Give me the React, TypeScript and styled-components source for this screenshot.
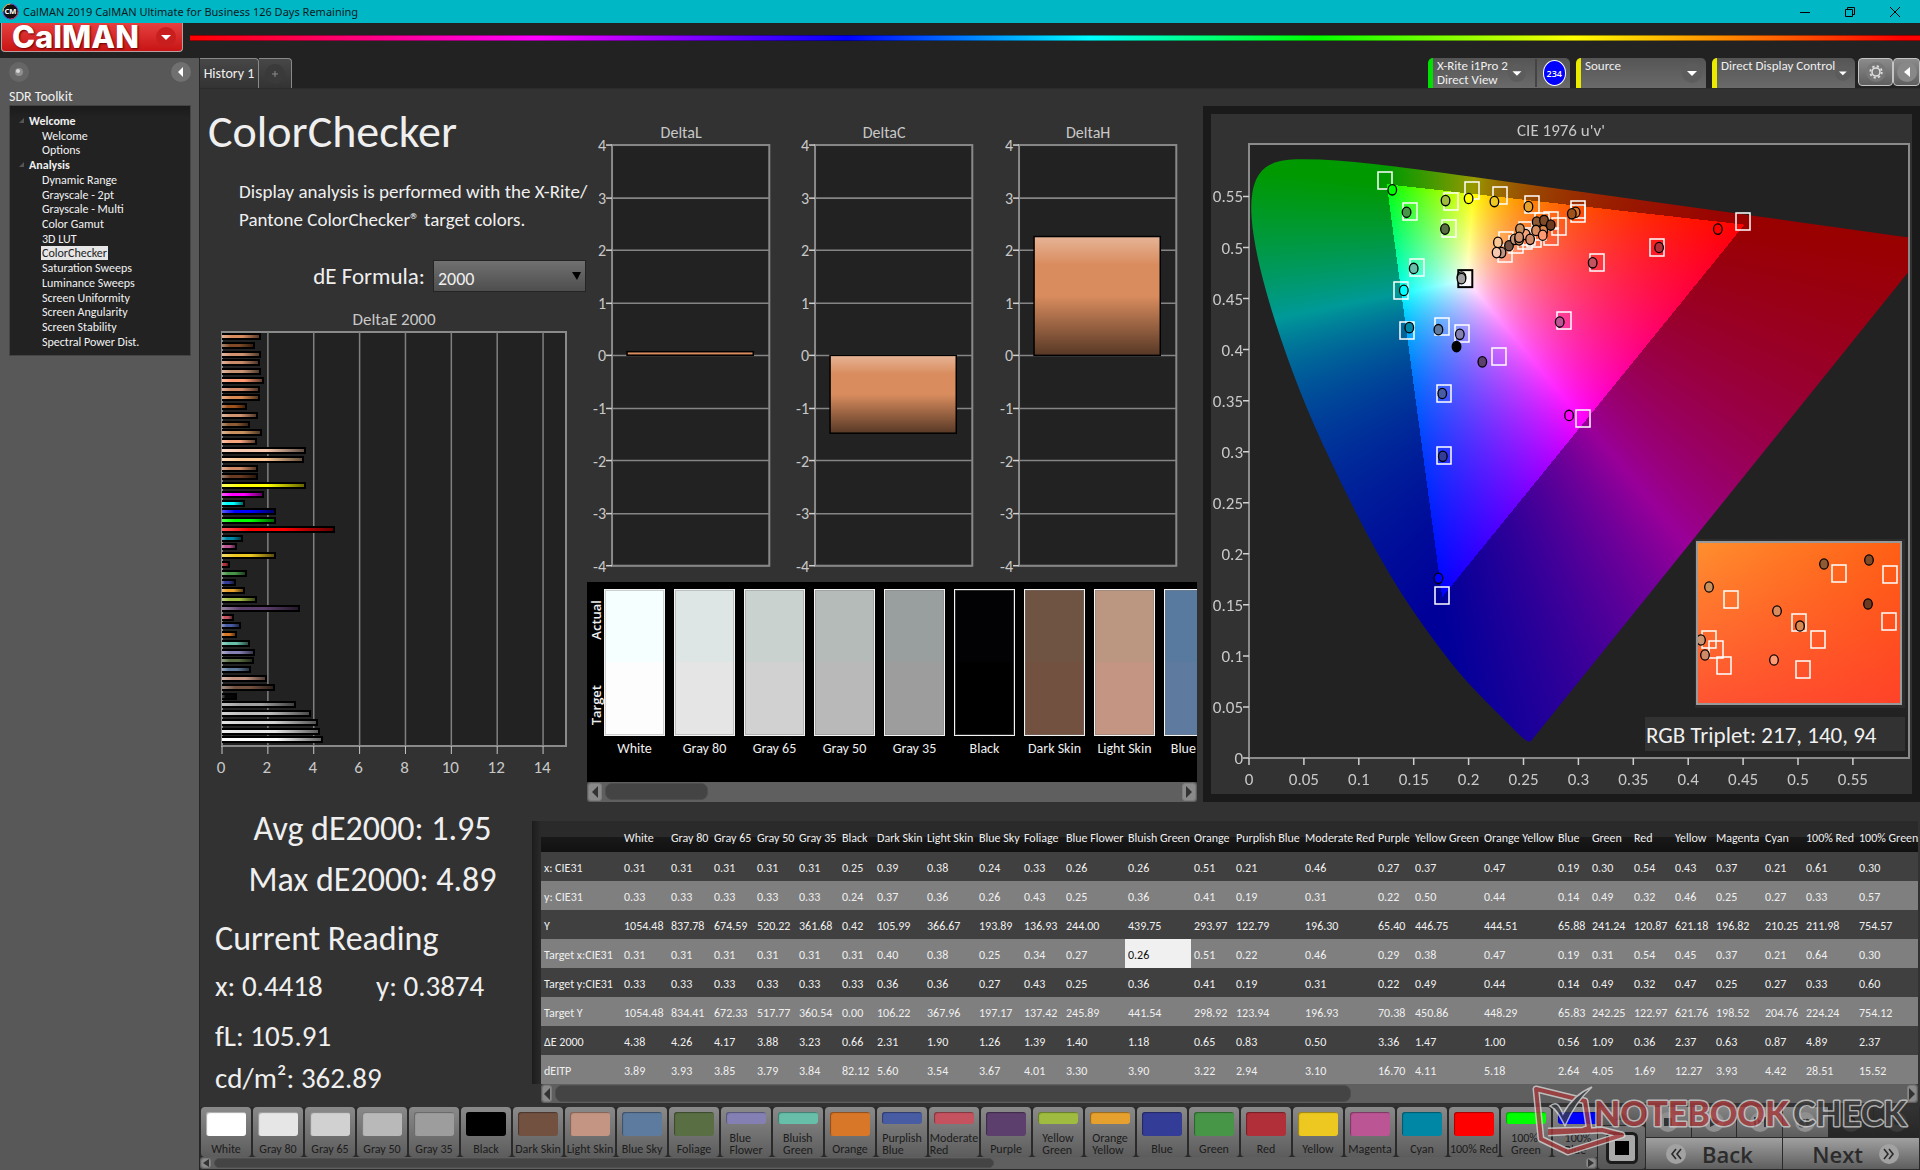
import React, { useEffect, useRef } from "react";
import styled, { createGlobalStyle } from "styled-components";

const SANS = "Calibri, Carlito, 'Roboto Condensed', 'Open Sans', sans-serif";
const UI = "'Open Sans', 'Noto Sans', sans-serif";

const GlobalStyle = createGlobalStyle`
  *, *::before, *::after { box-sizing: border-box; }
  body { margin: 0; background: #232323; color: #efefef; font-family: ${SANS}; }
  button, select { font: inherit; color: inherit; border: 0; margin: 0; padding: 0; background: none; }
  h1, h2, p, dl, dd, dt, ul { margin: 0; padding: 0; font-weight: 400; }
  ul { list-style: none; }
  svg { display: block; }
  a { color: inherit; text-decoration: none; }
`;

/* ---------- data ---------- */

const bars: [string, number][] = [
  ["#d98c5e", 1.66], ["#804a26", 1.4], ["#d0926e", 1.66], ["#c98a68", 1.6], ["#c99472", 1.66], ["#ff9a72", 1.78],
  ["#d08a68", 1.6], ["#d98850", 1.6], ["#a0521d", 1.04], ["#d09470", 1.52], ["#8d5a33", 1.18], ["#c8905c", 1.7],
  ["#f5a47c", 1.48], ["#f8c8ae", 3.6], ["#fbc795", 3.54], ["#d08a64", 1.52], ["#6b3a20", 1.52], ["#ffff00", 3.62],
  ["#ff00ff", 1.78], ["#00ffff", 0.96], ["#0000ff", 2.3], ["#00ff00", 2.3], ["#ff0000", 4.88], ["#0087a5", 0.87],
  ["#bc5594", 0.63], ["#edc820", 2.3], ["#b02f38", 0.32], ["#479547", 1.06], ["#333c97", 0.56], ["#e6a02e", 0.96],
  ["#9fbb40", 1.47], ["#5c3f6c", 3.36], ["#c4535f", 0.5], ["#485ca4", 0.8], ["#d97728", 0.63], ["#67bfa9", 1.18],
  ["#8480b3", 1.4], ["#596c42", 1.36], ["#5f7a9c", 1.24], ["#c49582", 1.92], ["#725141", 2.28], ["#050505", 0.63],
  ["#a0a0a0", 3.18], ["#bdbdbd", 3.84], ["#d2d2d2", 4.14], ["#e6e6e6", 4.24], ["#ffffff", 4.36],
];

const columns: [string, number][] = [
  ["White", 47], ["Gray 80", 43], ["Gray 65", 43], ["Gray 50", 42], ["Gray 35", 43], ["Black", 35], ["Dark Skin", 50],
  ["Light Skin", 52], ["Blue Sky", 45], ["Foliage", 42], ["Blue Flower", 62], ["Bluish Green", 66], ["Orange", 42],
  ["Purplish Blue", 69], ["Moderate Red", 73], ["Purple", 37], ["Yellow Green", 69], ["Orange Yellow", 74], ["Blue", 34],
  ["Green", 42], ["Red", 41], ["Yellow", 41], ["Magenta", 49], ["Cyan", 41], ["100% Red", 53], ["100% Green", 62],
];

const rows: [string, string][] = [
  ["x: CIE31", "0.31 0.31 0.31 0.31 0.31 0.25 0.39 0.38 0.24 0.33 0.26 0.26 0.51 0.21 0.46 0.27 0.37 0.47 0.19 0.30 0.54 0.43 0.37 0.21 0.61 0.30"],
  ["y: CIE31", "0.33 0.33 0.33 0.33 0.33 0.24 0.37 0.36 0.26 0.43 0.25 0.36 0.41 0.19 0.31 0.22 0.50 0.44 0.14 0.49 0.32 0.46 0.25 0.27 0.33 0.57"],
  ["Y", "1054.48 837.78 674.59 520.22 361.68 0.42 105.99 366.67 193.89 136.93 244.00 439.75 293.97 122.79 196.30 65.40 446.75 444.51 65.88 241.24 120.87 621.18 196.82 210.25 211.98 754.57"],
  ["Target x:CIE31", "0.31 0.31 0.31 0.31 0.31 0.31 0.40 0.38 0.25 0.34 0.27 0.26 0.51 0.22 0.46 0.29 0.38 0.47 0.19 0.31 0.54 0.45 0.37 0.21 0.64 0.30"],
  ["Target y:CIE31", "0.33 0.33 0.33 0.33 0.33 0.33 0.36 0.36 0.27 0.43 0.25 0.36 0.41 0.19 0.31 0.22 0.49 0.44 0.14 0.49 0.32 0.47 0.25 0.27 0.33 0.60"],
  ["Target Y", "1054.48 834.41 672.33 517.77 360.54 0.00 106.22 367.96 197.17 137.42 245.89 441.54 298.92 123.94 196.93 70.38 450.86 448.29 65.83 242.25 122.97 621.76 198.52 204.76 224.24 754.12"],
  ["ΔE 2000", "4.38 4.26 4.17 3.88 3.23 0.66 2.31 1.90 1.26 1.39 1.40 1.18 0.65 0.83 0.50 3.36 1.47 1.00 0.56 1.09 0.36 2.37 0.63 0.87 4.89 2.37"],
  ["dEITP", "3.89 3.93 3.85 3.79 3.84 82.12 5.60 3.54 3.67 4.01 3.30 3.90 3.22 2.94 3.10 16.70 4.11 5.18 2.64 4.05 1.69 12.27 3.93 4.42 28.51 15.52"],
];

const compare: [string, string, string][] = [
  ["White", "#f6ffff", "#fdfdfd"], ["Gray 80", "#dde6e5", "#e5e5e5"], ["Gray 65", "#cad2cf", "#d1d1d1"],
  ["Gray 50", "#b5bbb9", "#b9b9b9"], ["Gray 35", "#999f9e", "#9d9d9d"], ["Black", "#020204", "#000000"],
  ["Dark Skin", "#6f5443", "#725141"], ["Light Skin", "#bb9781", "#c39582"], ["Blue Sky", "#587a9f", "#5f7a9f"],
];

const patches: [string, string][] = [
  ["White", "#ffffff"], ["Gray 80", "#e6e6e6"], ["Gray 65", "#d1d1d1"], ["Gray 50", "#b9b9b9"], ["Gray 35", "#9d9d9d"],
  ["Black", "#000000"], ["Dark Skin", "#725141"], ["Light Skin", "#c49582"], ["Blue Sky", "#5d7b9f"], ["Foliage", "#5a6e43"],
  ["Blue Flower", "#8480b3"], ["Bluish Green", "#67bfa9"], ["Orange", "#d97728"], ["Purplish Blue", "#485ca4"],
  ["Moderate Red", "#c4535f"], ["Purple", "#5c3f6c"], ["Yellow Green", "#9fbb40"], ["Orange Yellow", "#e6a02e"],
  ["Blue", "#333c97"], ["Green", "#479547"], ["Red", "#b02f38"], ["Yellow", "#edc820"], ["Magenta", "#bb5594"],
  ["Cyan", "#0087a5"], ["100% Red", "#ff0000"], ["100% Green", "#00ff00"], ["100% Blue", "#0000ff"],
];
const twoLine = (n: string) => /Flower|Bluish|Purplish|Moderate|Yellow Green|Orange Yellow|100% (Green|Blue)/.test(n);

const targets: [number, number][] = [
  [0.124, 0.565], [0.147, 0.535], [0.184, 0.545], [0.203, 0.555], [0.229, 0.55], [0.258, 0.542], [0.2995, 0.537],
  [0.2995, 0.533], [0.182, 0.518], [0.45, 0.525], [0.372, 0.5], [0.317, 0.485], [0.2865, 0.428], [0.153, 0.48],
  [0.138, 0.457], [0.1435, 0.418], [0.1755, 0.422], [0.194, 0.4155], [0.228, 0.393], [0.1775, 0.357],
  [0.3045, 0.332], [0.1775, 0.2955], [0.1755, 0.159], [0.234, 0.5065], [0.233, 0.494], [0.2435, 0.502],
  [0.252, 0.516], [0.2665, 0.525], [0.2755, 0.526], [0.282, 0.52], [0.2755, 0.51], [0.26, 0.5085], [0.251, 0.506],
  [0.2545, 0.51], [0.2645, 0.515],
];

const readings: [number, number, string][] = [
  [0.1305, 0.5565, "#00ff00"], [0.1435, 0.5345, "#479547"], [0.179, 0.546, "#9fbb40"], [0.2, 0.548, "#ffff00"],
  [0.2235, 0.545, "#edc820"], [0.2545, 0.54, "#e6a02e"], [0.2975, 0.5345, "#d97728"], [0.294, 0.533, "#a0521d"],
  [0.1785, 0.518, "#596c42"], [0.427, 0.518, "#ff0000"], [0.3735, 0.5, "#b02f38"], [0.313, 0.485, "#c4535f"],
  [0.283, 0.427, "#bc5594"], [0.15, 0.4795, "#67bfa9"], [0.1935, 0.471, "#bdbdbd"], [0.1935, 0.4695, "#a0a0a0"],
  [0.141, 0.458, "#00ffff"], [0.146, 0.4215, "#0087a5"], [0.1725, 0.4195, "#5f7a9c"], [0.192, 0.415, "#8480b3"],
  [0.189, 0.403, "#000000"], [0.2125, 0.388, "#5c3f6c"], [0.176, 0.357, "#485ca4"], [0.2915, 0.3355, "#ff00ff"],
  [0.1765, 0.2955, "#333c97"], [0.1725, 0.176, "#0000ff"], [0.23, 0.495, "#c49582"], [0.2267, 0.505, "#fbc795"],
  [0.2255, 0.495, "#f8c8ae"], [0.2368, 0.5017, "#725141"], [0.252, 0.5127, "#f5a47c"], [0.2468, 0.518, "#c8905c"],
  [0.242, 0.508, "#c99472"], [0.246, 0.5075, "#c98a68"], [0.246, 0.51, "#d0926e"], [0.256, 0.508, "#d08a68"],
  [0.262, 0.525, "#8d5a33"], [0.268, 0.5167, "#d98850"], [0.2614, 0.5167, "#d98c5e"], [0.2687, 0.5265, "#804a26"],
  [0.2748, 0.522, "#6b3a20"], [0.2675, 0.512, "#ff9a72"],
];

const insetTargets: [number, number][] = [
  [142, 32], [193, 33], [34, 58], [102, 81], [121, 98], [192, 80], [12, 98], [19, 108], [27, 124], [106, 128],
];
const insetReadings: [number, number, string][] = [
  [127, 22, "#8d5a33"], [172, 18, "#804a26"], [12, 45, "#c8905c"], [171, 62, "#6b3a20"], [80, 69, "#d98c5e"],
  [103, 84, "#d98850"], [4, 98, "#c99472"], [8, 113, "#d08a68"], [77, 118, "#ff9a72"],
];

/* Spectral locus, CIE 1931 x,y */
const locusXY: [number, number][] = [
  [0.1741, 0.005], [0.1733, 0.0048], [0.1714, 0.0051], [0.1689, 0.0069], [0.1644, 0.0109], [0.1566, 0.0177],
  [0.144, 0.0297], [0.1241, 0.0578], [0.1096, 0.0868], [0.0913, 0.1327], [0.0687, 0.2007], [0.0454, 0.295],
  [0.0235, 0.4127], [0.0082, 0.5384], [0.0039, 0.6548], [0.0139, 0.7502], [0.0389, 0.812], [0.0743, 0.8338],
  [0.1142, 0.8262], [0.1547, 0.8059], [0.2296, 0.7543], [0.3016, 0.6923], [0.3731, 0.6245], [0.4441, 0.5547],
  [0.5125, 0.4866], [0.5752, 0.4242], [0.627, 0.3725], [0.6658, 0.334], [0.6915, 0.3083], [0.719, 0.2809],
  [0.7347, 0.2653],
];

/* ---------- window chrome ---------- */

const Shell = styled.div`
  position: relative;
  display: flex;
  flex-direction: column;
  min-height: 100vh;
  overflow: hidden;
`;
const TitleBar = styled.header`
  display: flex;
  align-items: center;
  gap: 4px;
  height: 23px;
  padding: 0 15px 0 2px;
  background: #00b7c6;
  color: #0a1a1c;
  font: 11px 'Noto Sans', sans-serif;
`;
const TitleText = styled.span`flex: 1;`;
const WindowButtons = styled.div`
  display: flex;
  gap: 25px;
`;
const IconButton = styled.button`
  display: grid;
  place-items: center;
  width: 20px;
  height: 20px;
`;
const BrandRow = styled.div`
  display: flex;
  align-items: flex-start;
  height: 35px;
  background: #222;
`;
const Brand = styled.button`
  display: flex;
  align-items: center;
  justify-content: space-between;
  width: 182px;
  height: 29px;
  margin: 0 7px 0 1px;
  padding: 0 6px 1px 10px;
  border: 1px solid #b9a0a0;
  border-top: 0;
  border-radius: 0 0 4px 4px;
  background: linear-gradient(#e64040, #c81414);
  color: #fff;
  font: 800 31px/28px Inter, sans-serif;
  text-shadow: 1px 1px 2px #600;
`;
const Rainbow = styled.div`
  flex: 1;
  height: 6px;
  margin-top: 12px;
  border: solid rgba(0, 0, 0, 0.4);
  border-width: 1px 0;
  background: linear-gradient(90deg, #f00 0%, #f0f 20%, #00f 38%, #0ff 52%, #0f0 65%, #ff0 80%, #f00 99%) border-box;
`;
const Body = styled.div`
  flex: 1;
  display: grid;
  grid-template-columns: 200px minmax(0, 1fr);
`;

/* ---------- sidebar ---------- */

const Sidebar = styled.aside`
  padding: 3px 8px 0 9px;
  border-right: 1px solid #262626;
  background: #585858;
  font-size: 12px;
`;
const SideTop = styled.div`
  display: flex;
  justify-content: space-between;
  align-items: center;
  height: 21px;
`;
const SideTitle = styled.h2`
  height: 23px;
  font-size: 14px;
  line-height: 29px;
`;
const Tree = styled.nav`
  height: 251px;
  padding: 8px 0 6px 9px;
  border: 1px solid #444;
  background: linear-gradient(#1b1b1b, #222 12px);
  display: flex;
  flex-direction: column;
  justify-content: space-between;
`;
const Branch = styled.h3`
  display: flex;
  align-items: center;
  gap: 4px;
  margin: 0;
  font-size: 12px;
  line-height: 14px;
`;
const Leaf = styled.a<{ $on?: boolean }>`
  align-self: flex-start;
  margin-left: 22px;
  padding: 0 1px;
  line-height: 14px;
  background: ${(p) => (p.$on ? "#e6e6e6" : "none")};
  color: ${(p) => (p.$on ? "#222" : "#f2f2f2")};
`;

/* ---------- tab strip ---------- */

const Main = styled.main`
  display: flex;
  flex-direction: column;
  background: #323232;
`;
const Strip = styled.div`
  display: flex;
  height: 31px;
  background: #222;
  border-bottom: 1px solid #2b2b2b;
`;
const Tab = styled.button<{ $w: number }>`
  display: grid;
  place-items: center;
  width: ${(p) => p.$w}px;
  height: 30px;
  border: 1px solid #8a8a8a;
  border-width: 1px 1px 0 0;
  border-top-right-radius: 4px;
  background: linear-gradient(#474747, #333);
  font-size: 14px;
`;
const Devices = styled.div`
  display: flex;
  align-items: flex-start;
  gap: 6px;
  margin-left: auto;
`;
const Tools = styled.div`
  display: flex;
  margin-left: -3px;
`;
const Device = styled.button<{ $w: number; $bar: string }>`
  display: flex;
  align-items: center;
  width: ${(p) => p.$w}px;
  height: 30px;
  padding: 0 4px 0 4px;
  border-left: 5px solid ${(p) => p.$bar};
  border-radius: 5px 5px 0 0;
  background: linear-gradient(#555, #6a6a6a);
  font-size: 13px;
  line-height: 14px;
  text-align: left;
`;
const DeviceName = styled.span`
  flex: 1;
  align-self: flex-start;
  padding-top: 1px;
  white-space: nowrap;
`;
const Divider = styled.span`
  width: 2px;
  height: 28px;
  margin: 0 6px 0 9px;
  background: #444;
`;
const Badge = styled.span`
  display: grid;
  place-items: center;
  width: 26px;
  height: 26px;
  border: 1px solid #fff;
  border-radius: 50%;
  background: #00f;
  color: #fff;
  font: 600 9px ${UI};
`;
const ToolButton = styled.button<{ $w: number }>`
  display: grid;
  place-items: center;
  width: ${(p) => p.$w}px;
  height: 28px;
  border: 1px solid #c4c4c4;
  border-radius: 4px;
  background: linear-gradient(#8b8b8b, #5f5f5f);
`;

/* ---------- workspace ---------- */

const Upper = styled.div`
  display: grid;
  grid-template-columns: 387px minmax(0, 616fr) minmax(0, 717fr);
  align-items: start;
  padding-bottom: 1px;
`;
const Intro = styled.section`padding-top: 12px;`;
const PageTitle = styled.h1`
  padding-left: 8px;
  font-size: 46px;
  line-height: 60px;
`;
const Lead = styled.p`
  padding: 17px 0 0 39px;
  font-size: 19px;
  line-height: 28px;
  white-space: nowrap;
`;
const Formula = styled.div`
  display: flex;
  justify-content: flex-end;
  align-items: center;
  gap: 8px;
  margin: 26px 1px 16px 0;
  font-size: 23px;
`;
const SelectBox = styled.span`
  position: relative;
  width: 153px;
  svg { position: absolute; right: 5px; top: 12px; pointer-events: none; }
`;
const Select = styled.select`
  appearance: none;
  width: 100%;
  height: 32px;
  padding: 5px 0 0 4px;
  border: 1px solid #242424;
  background: linear-gradient(#707070, #4e4e4e);
  font-size: 18px;
`;
const Middle = styled.section`padding: 31px 6px 0 0;`;
const Deltas = styled.div`
  display: grid;
  grid-template-columns: repeat(3, 1fr);
  margin-bottom: 6px;
`;
const ComparePanel = styled.div`
  display: flex;
  height: 200px;
  overflow: hidden;
  background: #000;
`;
const SideLabels = styled.div`
  display: flex;
  flex-direction: column;
  flex: none;
  justify-content: space-between;
  align-items: center;
  width: 17px;
  height: 144px;
  padding: 18px 0 0;
  font: 600 13px/16px ${UI};
  span { writing-mode: vertical-rl; transform: rotate(180deg); }
`;
const CompareItem = styled.figure`
  flex: none;
  width: 70px;
  margin: 7px 0 0;
  figcaption { width: 61px; font-size: 14px; line-height: 26px; text-align: center; white-space: nowrap; }
`;
const Split = styled.div<{ $a: string; $t: string }>`
  width: 61px;
  height: 147px;
  border: 1px solid #f4f4f4;
  background: linear-gradient(${(p) => p.$a} 50%, ${(p) => p.$t} 50%);
  box-shadow: inset 0 0 0 1px rgba(120, 120, 120, 0.35);
`;

/* ---------- scroll bar ---------- */

const Track = styled.div<{ $h: number }>`
  display: flex;
  align-items: center;
  gap: 3px;
  height: ${(p) => p.$h}px;
  padding: 0 1px;
  border-radius: 3px;
  background: #5f5f5f;
`;
const ArrowButton = styled.button<{ $w: number }>`
  display: grid;
  place-items: center;
  flex: none;
  width: ${(p) => p.$w}px;
  height: 88%;
  border: 1px solid #7c7c7c;
  border-radius: 3px;
  background: #8a8a8a;
`;
const Rail = styled.div`
  flex: 1;
  height: 86%;
`;
const Thumb = styled.div`
  height: 100%;
  border: 1px solid #4e4e4e;
  border-radius: 7px;
  background: #444;
`;
function ScrollBar({ h, arrow, size }: { h: number; arrow: number; size: number }) {
  const tip = Math.round(h * 0.3);
  return (
    <Track $h={h}>
      <ArrowButton $w={arrow} aria-label="Scroll left">
        <svg width="6" height={tip * 2} viewBox="0 0 6 12" preserveAspectRatio="none"><path d="M6 0V12L0 6Z" fill="#333" /></svg>
      </ArrowButton>
      <Rail><Thumb style={{ width: `${size}%` }} /></Rail>
      <ArrowButton $w={arrow} aria-label="Scroll right">
        <svg width="6" height={tip * 2} viewBox="0 0 6 12" preserveAspectRatio="none"><path d="M0 0V12L6 6Z" fill="#333" /></svg>
      </ArrowButton>
    </Track>
  );
}

/* ---------- charts ---------- */

const Chart = styled.svg`
  width: 100%;
  height: auto;
  font-family: ${SANS};
  fill: #c8c8c8;
`;

function DeltaEChart() {
  const x0 = 22, y0 = 24, w = 344, h = 414, unit = w / 15, pitch = 8.77;
  return (
    <Chart viewBox="0 0 387 474" fontSize="17" role="img" aria-label="DeltaE 2000">
      <defs>
        <linearGradient id="sheenX">
          <stop offset="0" stopColor="#fff" stopOpacity=".35" />
          <stop offset=".25" stopColor="#fff" stopOpacity="0" />
          <stop offset=".55" stopColor="#000" stopOpacity="0" />
          <stop offset="1" stopColor="#000" stopOpacity=".6" />
        </linearGradient>
      </defs>
      <text x="194" y="17" textAnchor="middle">DeltaE 2000</text>
      <rect x={x0} y={y0} width={w} height={h} fill="#222" stroke="#8a8a8a" strokeWidth="2" />
      {[0, 2, 4, 6, 8, 10, 12, 14].map((t) => (
        <g key={t}>
          {t > 0 && <path d={`M${x0 + t * unit} ${y0}v${h}`} stroke="#808080" strokeWidth="1.5" />}
          <path d={`M${x0 + t * unit} ${y0 + h}v8`} stroke="#c8c8c8" />
          <text x={x0 + t * unit - 1} y="465" textAnchor="middle">{t}</text>
        </g>
      ))}
      {bars.map(([c, v], i) => (
        <g key={i} transform={`translate(${x0} ${Math.round(y0 + 4 + i * pitch) - 3})`} shapeRendering="crispEdges">
          <rect width={v * unit + 1} height="7" fill="#000" />
          <rect y="2" width={v * unit - 1} height="3" fill={c} />
          <rect y="2" width={v * unit - 1} height="3" fill="url(#sheenX)" />
        </g>
      ))}
    </Chart>
  );
}

function DeltaChart({ name, value }: { name: string; value: number }) {
  const x0 = 25, y0 = 25, w = 157, unit = 52.5;
  const top = y0 + (4 - Math.max(value, 0)) * unit;
  const tall = Math.abs(value) * unit;
  return (
    <Chart viewBox="0 0 203 455" fontSize="16" role="img" aria-label={name}>
      <defs>
        <linearGradient id="sheenY" x2="0" y2="1">
          <stop offset="0" stopColor="#fff" stopOpacity=".35" />
          <stop offset=".24" stopColor="#fff" stopOpacity="0" />
          <stop offset=".5" stopColor="#000" stopOpacity="0" />
          <stop offset="1" stopColor="#000" stopOpacity=".6" />
        </linearGradient>
      </defs>
      <text x="94" y="18" textAnchor="middle">{name}</text>
      <rect x={x0} y={y0} width={w} height={unit * 8} fill="#222" stroke="#8a8a8a" strokeWidth="2" />
      {[4, 3, 2, 1, 0, -1, -2, -3, -4].map((t) => (
        <g key={t}>
          <path d={`M${x0} ${Math.round(y0 + (4 - t) * unit)}h${w}`} stroke="#858585" strokeWidth="1.5" />
          <path d={`M${x0 - 6} ${Math.round(y0 + (4 - t) * unit)}h6`} stroke="#d0d0d0" strokeWidth="1.5" />
          <text x={x0 - 6} y={y0 + (4 - t) * unit + 6} textAnchor="end">{t}</text>
        </g>
      ))}
      <rect x={x0 + 15} y={top} width="126" height={tall} fill="#d98c5e" />
      <rect x={x0 + 15} y={top} width="126" height={tall} fill="url(#sheenY)" stroke="#000" strokeWidth="1.5" />
    </Chart>
  );
}

const CieFrame = styled.section`
  margin-top: 17px;
  padding: 8px;
  background: #1a1a1a;
`;
const CieInner = styled.div`
  display: grid;
  background: #323232;
  > * { grid-area: 1 / 1; width: 100%; }
`;
const Gamut = styled.canvas`
  height: auto;
  aspect-ratio: 701 / 680;
`;
const CieOverlay = styled(Chart)`position: relative;`;

const CIE = { w: 701, h: 680, x0: 38, y1: 644, right: 698, top: 30, su: 1098, sv: 1021 };
const px = (u: number) => CIE.x0 + u * CIE.su;
const py = (v: number) => CIE.y1 - v * CIE.sv;

function paintGamut(canvas: HTMLCanvasElement) {
  const ctx = canvas.getContext("2d");
  if (!ctx) return;
  const img = ctx.createImageData(CIE.w, CIE.h);
  for (let j = 0; j < CIE.h; j++) {
    for (let i = 0; i < CIE.w; i++) {
      const u = (i - CIE.x0) / CIE.su;
      const v = (CIE.y1 - j) / CIE.sv;
      if (v <= 0.001) continue;
      const X = (9 * u) / (4 * v);
      const Z = (12 - 3 * u - 20 * v) / (4 * v);
      let r = 3.2406 * X - 1.5372 - 0.4986 * Z;
      let g = -0.9689 * X + 1.8758 + 0.0415 * Z;
      let b = 0.0557 * X - 0.204 + 1.057 * Z;
      const inside = r >= 0 && g >= 0 && b >= 0;
      r = Math.max(r, 0); g = Math.max(g, 0); b = Math.max(b, 0);
      const m = Math.max(r, g, b);
      /* colours outside the display gamut are dimmed to 60% */
      const level = inside ? 255 : 153;
      const gamma = inside ? 0.87 : 1;
      const o = (j * CIE.w + i) * 4;
      img.data[o] = level * Math.pow(r / m, gamma);
      img.data[o + 1] = level * Math.pow(g / m, gamma);
      img.data[o + 2] = level * Math.pow(b / m, gamma);
      img.data[o + 3] = 255;
    }
  }
  ctx.putImageData(img, 0, 0);
  const pts = locusXY.map(([x, y]) => {
    const d = -2 * x + 12 * y + 3;
    return [px((4 * x) / d), py((9 * y) / d)];
  });
  ctx.globalCompositeOperation = "destination-in";
  ctx.beginPath();
  ctx.moveTo(pts[0][0], pts[0][1]);
  for (let i = 1; i < pts.length - 1; i++) {
    ctx.quadraticCurveTo(pts[i][0], pts[i][1], (pts[i][0] + pts[i + 1][0]) / 2, (pts[i][1] + pts[i + 1][1]) / 2);
  }
  const end = pts[pts.length - 1];
  ctx.lineTo(end[0], end[1]);
  ctx.closePath();
  ctx.fill();
  ctx.globalCompositeOperation = "destination-over";
  ctx.fillStyle = "#222";
  ctx.fillRect(CIE.x0, CIE.top, CIE.right - CIE.x0, CIE.y1 - CIE.top);
  ctx.globalCompositeOperation = "source-over";
  ctx.clearRect(CIE.right, 0, 10, CIE.h);
}

function Square({ x, y, c = "#fff" }: { x: number; y: number; c?: string }) {
  return <rect x={Math.round(x - 7)} y={Math.round(y - 9)} width="14" height="17" fill="none" stroke={c} strokeWidth="1.5" />;
}
function Dot({ x, y, c }: { x: number; y: number; c: string }) {
  return <ellipse cx={x} cy={y} rx="4.3" ry="5.2" fill={c} stroke="#000" strokeWidth="1.3" />;
}

function CieChart() {
  const ref = useRef<HTMLCanvasElement>(null);
  useEffect(() => { if (ref.current) paintGamut(ref.current); }, []);
  const ticks = Array.from({ length: 12 }, (_, i) => i * 0.05);
  const label = (t: number) => String(Number(t.toFixed(2)));
  return (
    <CieFrame>
      <CieInner>
        <Gamut ref={ref} width={CIE.w} height={CIE.h} />
        <CieOverlay viewBox={`0 0 ${CIE.w} ${CIE.h}`} fontSize="17" role="img" aria-label="CIE 1976 u'v' chromaticity chart">
          <defs>
            <linearGradient id="insetX"><stop stopColor="#ff8f2e" /><stop offset="1" stopColor="#ff5f14" /></linearGradient>
            <linearGradient id="insetY" x2="0" y2="1">
              <stop stopColor="#ff3030" stopOpacity="0" /><stop offset="1" stopColor="#ff3434" stopOpacity=".65" />
            </linearGradient>
            <clipPath id="insetClip"><rect width="204" height="162" /></clipPath>
          </defs>
          <text x="350" y="22" textAnchor="middle">CIE 1976 u'v'</text>
          <rect x={CIE.x0} y={CIE.top} width={CIE.right - CIE.x0} height={CIE.y1 - CIE.top} fill="none" stroke="#8a8a8a" strokeWidth="2" />
          {ticks.map((t) => (
            <g key={t} strokeWidth="1.5">
              <path d={`M${px(t)} ${CIE.y1}v7M${CIE.x0 - 6} ${py(t)}h6`} stroke="#d0d0d0" />
              <text x={px(t)} y="671" textAnchor="middle">{label(t)}</text>
              <text x={CIE.x0 - 6} y={py(t) + 6} textAnchor="end">{label(t)}</text>
            </g>
          ))}
          {targets.map(([u, v], i) => <Square key={i} x={px(u)} y={py(v)} />)}
          <rect x={px(0.197) - 7} y={py(0.47) - 8} width="14" height="17" fill="#fff" fillOpacity=".5" stroke="#000" strokeWidth="2" />
          {readings.map(([u, v, c], i) => <Dot key={i} x={px(u)} y={py(v)} c={c} />)}
          <rect x="484" y="425" width="210" height="169" fill="#2c2c2c" />
          <g transform="translate(486 428)">
            <rect width="204" height="162" fill="url(#insetX)" />
            <rect width="204" height="162" fill="url(#insetY)" />
            <g clipPath="url(#insetClip)">
              {insetTargets.map(([x, y], i) => <Square key={i} x={x} y={y} />)}
              {insetReadings.map(([x, y, c], i) => <Dot key={i} x={x} y={y} c={c} />)}
            </g>
            <rect width="204" height="162" fill="none" stroke="#999" strokeWidth="2" />
          </g>
          <rect x="434" y="603" width="260" height="34" fill="#323232" />
          <text x="435" y="629" fontSize="23" fill="#f0f0f0">RGB Triplet: 217, 140, 94</text>
        </CieOverlay>
      </CieInner>
    </CieFrame>
  );
}

/* ---------- readings and table ---------- */

const Lower = styled.div`
  display: grid;
  grid-template-columns: 332px minmax(0, 1fr);
  align-items: start;
`;
const Stats = styled.section`padding: 0 0 0 15px;`;
const Big = styled.p`
  padding-right: 2px;
  font-size: 34px;
  line-height: 51px;
  text-align: center;
`;
const Heading = styled.h2`
  padding-top: 4px;
  font-size: 34px;
  line-height: 60px;
`;
const Values = styled.div`
  display: grid;
  grid-template-columns: 161px 1fr;
  font-size: 29px;
  line-height: 34px;
`;
const Photometry = styled.div`
  padding-top: 12px;
  font-size: 29px;
  line-height: 42px;
`;
const TableArea = styled.section`
  padding: 18px 2px 4px 9px;
  background: linear-gradient(90deg, #1c1c1c, #2a2a2a) 0 18px / 9px 263px no-repeat;
`;
const Table = styled.table`
  width: 100%;
  table-layout: fixed;
  border-collapse: collapse;
  font-size: 12px;
  text-align: left;
  white-space: nowrap;
  th, td { height: 29px; padding: 3px 0 0 3px; font-weight: 400; }
  thead th { height: 31px; background: linear-gradient(#2a2a2a 50%, #191919 50%, #111); }
  tbody tr:nth-child(odd) { background: #404040; }
  tbody tr:nth-child(even) { background: #7f7f7f; }
`;
const Cell = styled.td<{ $on: boolean }>`
  background: ${(p) => (p.$on ? "#f0f0f0" : "none")};
  color: ${(p) => (p.$on ? "#111" : "inherit")};
`;

/* ---------- footer ---------- */

const Footer = styled.footer`
  display: grid;
  grid-template-columns: minmax(0, 1fr) 49px 274px;
  flex: 1;
  align-items: start;
  background: #2a2a2a;
`;
const Patches = styled.div`
  display: flex;
  gap: 2px;
  padding-left: 1px;
  overflow: hidden;
`;
const Patch = styled.button`
  display: flex;
  flex-direction: column;
  align-items: center;
  justify-content: space-between;
  flex: none;
  width: 50px;
  height: 50px;
  padding: 5px 0 1px;
  border-radius: 4px;
  background: linear-gradient(#8a8a8a, #5c5c5c);
  color: #1c1c1c;
  font-size: 12px;
  line-height: 12px;
  text-align: left;
`;
const Chip = styled.span<{ $c: string; $small: boolean }>`
  width: 40px;
  height: ${(p) => (p.$small ? 12 : 24)}px;
  border-radius: 3px;
  background: ${(p) => p.$c};
  box-shadow: inset 1px 1px 1px rgba(0, 0, 0, 0.35);
`;
const PatchName = styled.span<{ $wrap: boolean }>`
  width: ${(p) => (p.$wrap ? "min-content" : "auto")};
  padding-bottom: ${(p) => (p.$wrap ? 0 : 1)}px;
  white-space: ${(p) => (p.$wrap ? "normal" : "nowrap")};
`;
const StopColumn = styled.div`
  display: grid;
  grid-template-rows: 18px 43px;
  gap: 1px;
  padding: 0 1px;
`;
const StopCell = styled.button`
  display: grid;
  place-items: center;
  border-radius: 3px;
  background: linear-gradient(#707070, #555);
`;
const Controls = styled.div`
  display: grid;
  grid-template-columns: repeat(6, 1fr);
  grid-template-rows: 30px 31px;
  gap: 1px;
  padding-right: 1px;
`;
const Transport = styled.button<{ $dark?: boolean }>`
  display: grid;
  place-items: center;
  background: ${(p) => (p.$dark ? "linear-gradient(#333, #262626)" : "linear-gradient(#858585, #5c5c5c)")};
`;
const NavButton = styled.button<{ $end?: boolean }>`
  grid-column: span 3;
  display: flex;
  align-items: center;
  justify-content: ${(p) => (p.$end ? "flex-end" : "flex-start")};
  gap: 16px;
  padding: 0 20px;
  background: linear-gradient(#a0a0a0, #5e5e5e);
  color: #2b2b2b;
  font: 600 22px ${UI};
`;
const Watermark = styled.svg`
  position: absolute;
  right: 0;
  bottom: 0;
  width: 400px;
  height: 100px;
  pointer-events: none;
  font-family: Lato, sans-serif;
`;

function RoundIcon({ children, r = 10, fill = "#6b6b6b" }: { children: React.ReactNode; r?: number; fill?: string }) {
  return (
    <svg width={r * 2} height={r * 2} viewBox="-10 -10 20 20">
      <circle r="10" fill={fill} />
      {children}
    </svg>
  );
}
const Down = ({ fill = "#5c5c5c" }: { fill?: string }) => <RoundIcon fill={fill}><path d="M-5 -2H5L0 3Z" fill="#fff" /></RoundIcon>;

const transport = ["M-4 -4H4V4H-4Z", "M-4 -5L6 0L-4 5Z", "M-6 -5h2V5h-2ZM4 -5h2V5h-2ZM-2 -3l5 3l-5 3Z", "M-5 0a3 3 0 1 1 5 2a3 3 0 1 0 0 -4l-2 2a3 3 0 1 1 -3 0Z"];
const analysis = ["Dynamic Range", "Grayscale - 2pt", "Grayscale - Multi", "Color Gamut", "3D LUT", "ColorChecker", "Saturation Sweeps",
  "Luminance Sweeps", "Screen Uniformity", "Screen Angularity", "Screen Stability", "Spectral Power Dist."];
const Twist = () => <svg width="6" height="6" viewBox="0 0 6 6"><path d="M5 0V5H0Z" fill="#555" /></svg>;

export default function App() {
  return (
    <Shell>
      <GlobalStyle />
      <TitleBar>
        <svg width="17" height="17" viewBox="-9 -9 18 18">
          <circle r="8" fill="#111" stroke="#7a3fd0" />
          <path d="M-8 0A8 8 0 0 1 0 -8" fill="none" stroke="#e8d020" />
          <path d="M8 0A8 8 0 0 1 0 8" fill="none" stroke="#e03050" />
          <text y="3" textAnchor="middle" fontSize="8" fontWeight="700" fill="#fff">CM</text>
        </svg>
        <TitleText>CalMAN 2019 CalMAN Ultimate for Business 126 Days Remaining</TitleText>
        <WindowButtons>
          <IconButton aria-label="Minimize"><svg width="10" height="10"><path d="M0 5.5H10" stroke="#000" /></svg></IconButton>
          <IconButton aria-label="Restore"><svg width="10" height="10" fill="none" stroke="#000"><path d="M.5 2.5H7.5V9.5H.5ZM2.5 2.5V.5H9.5V7.5H7.5" /></svg></IconButton>
          <IconButton aria-label="Close"><svg width="10" height="10" stroke="#000"><path d="M0 0L10 10M10 0L0 10" /></svg></IconButton>
        </WindowButtons>
      </TitleBar>
      <BrandRow>
        <Brand>CalMAN<Down fill="#c81e1e" /></Brand>
        <Rainbow />
      </BrandRow>
      <Body>
        <Sidebar>
          <SideTop>
            <RoundIcon fill="#666"><circle r="4" fill="#8f8f8f" /><circle cx="-1" cy="-1" r="2" fill="#d8d8d8" /></RoundIcon>
            <IconButton aria-label="Collapse"><RoundIcon fill="#707070"><path d="M2 -5V5L-3 0Z" fill="#fff" /></RoundIcon></IconButton>
          </SideTop>
          <SideTitle>SDR Toolkit</SideTitle>
          <Tree>
            <Branch><Twist />Welcome</Branch>
            <Leaf href="#welcome">Welcome</Leaf>
            <Leaf href="#options">Options</Leaf>
            <Branch><Twist />Analysis</Branch>
            {analysis.map((a) => <Leaf key={a} href="#page" $on={a === "ColorChecker"}>{a}</Leaf>)}
          </Tree>
        </Sidebar>
        <Main>
          <Strip>
            <Tab $w={59}>History 1</Tab>
            <Tab $w={33} aria-label="Add tab"><RoundIcon fill="#3a3a3a"><path d="M-3 0H3M0 -3V3" stroke="#8a8a8a" /></RoundIcon></Tab>
            <Devices>
              <Device $w={142} $bar="#00e000">
                <DeviceName>X-Rite i1Pro 2<br />Direct View</DeviceName><Down /><Divider /><Badge>234</Badge>
              </Device>
              <Device $w={130} $bar="#eaea00"><DeviceName>Source</DeviceName><Down /></Device>
              <Device $w={143} $bar="#eaea00"><DeviceName>Direct Display Control</DeviceName><Down /></Device>
              <Tools>
                <ToolButton $w={35} aria-label="Settings">
                  <RoundIcon fill="#777">
                    <circle r="4" fill="none" stroke="#ddd" strokeWidth="1.6" />
                    <circle r="5.8" fill="none" stroke="#ddd" strokeWidth="1.8" strokeDasharray="2.28 2.28" />
                  </RoundIcon>
                </ToolButton>
                <ToolButton $w={27} aria-label="Collapse panel"><RoundIcon fill="#888"><path d="M3 -5V5L-3 0Z" fill="#fff" /></RoundIcon></ToolButton>
              </Tools>
            </Devices>
          </Strip>
          <Upper>
            <Intro>
              <PageTitle>ColorChecker</PageTitle>
              <Lead>Display analysis is performed with the X-Rite/<br />Pantone ColorChecker® target colors.</Lead>
              <Formula>
                <label htmlFor="formula">dE Formula:</label>
                <SelectBox>
                  <Select id="formula" defaultValue="2000"><option>2000</option><option>1994</option></Select>
                  <svg width="9" height="8"><path d="M0 0H9L5 8Z" fill="#000" /></svg>
                </SelectBox>
              </Formula>
              <DeltaEChart />
            </Intro>
            <Middle>
              <Deltas>
                <DeltaChart name="DeltaL" value={0.07} />
                <DeltaChart name="DeltaC" value={-1.48} />
                <DeltaChart name="DeltaH" value={2.26} />
              </Deltas>
              <ComparePanel>
                <SideLabels><span>Actual</span><span>Target</span></SideLabels>
                {compare.map(([n, a, t]) => (
                  <CompareItem key={n}><Split $a={a} $t={t} /><figcaption>{n}</figcaption></CompareItem>
                ))}
              </ComparePanel>
              <ScrollBar h={20} arrow={14} size={18} />
            </Middle>
            <CieChart />
          </Upper>
          <Lower>
            <Stats>
              <Big>Avg dE2000: 1.95</Big>
              <Big>Max dE2000: 4.89</Big>
              <Heading>Current Reading</Heading>
              <Values><span>x: 0.4418</span><span>y: 0.3874</span></Values>
              <Photometry><p>fL: 105.91</p><p>cd/m²: 362.89</p></Photometry>
            </Stats>
            <TableArea>
              <Table>
                <colgroup>
                  <col width={80} />
                  {columns.map(([n, w], i) => <col key={n} width={i === columns.length - 1 ? undefined : w} />)}
                </colgroup>
                <thead><tr><th />{columns.map(([n]) => <th key={n} scope="col">{n}</th>)}</tr></thead>
                <tbody>
                  {rows.map(([name, data]) => (
                    <tr key={name}>
                      <th scope="row">{name}</th>
                      {data.split(" ").map((d, i) => <Cell key={i} $on={name === "Target x:CIE31" && i === 11}>{d}</Cell>)}
                    </tr>
                  ))}
                </tbody>
              </Table>
              <ScrollBar h={19} arrow={10} size={59} />
            </TableArea>
          </Lower>
          <Footer>
            <div>
              <Patches>
                {patches.map(([n, c]) => (
                  <Patch key={n}><Chip $c={c} $small={twoLine(n)} /><PatchName $wrap={twoLine(n)}>{n}</PatchName></Patch>
                ))}
              </Patches>
              <ScrollBar h={12} arrow={10} size={57} />
            </div>
            <StopColumn>
              <StopCell aria-label="Up"><svg width="14" height="7"><path d="M0 7L7 0L14 7Z" fill="#333" /></svg></StopCell>
              <StopCell aria-label="Stop">
                <svg width="32" height="32"><rect x="1.5" y="1.5" width="29" height="29" rx="4" fill="#a8a8a8" stroke="#1c1c1c" strokeWidth="3" /><rect x="9" y="9" width="14" height="14" fill="#000" /></svg>
              </StopCell>
            </StopColumn>
            <Controls>
              {transport.map((d) => <Transport key={d} aria-label="Transport"><RoundIcon fill="#8f8f8f"><path d={d} fill="#333" /></RoundIcon></Transport>)}
              <Transport $dark aria-label="Refresh"><RoundIcon fill="#3a3a3a"><path d="M-4 0a4 4 0 1 1 4 4" fill="none" stroke="#1c1c1c" strokeWidth="2" /></RoundIcon></Transport>
              <Transport $dark aria-label="Record"><RoundIcon fill="#3a3a3a"><circle r="3" fill="#2a2a2a" /></RoundIcon></Transport>
              <NavButton><RoundIcon fill="#a2a2a2"><path d="M0 -5L-4 0L0 5M5 -5L1 0L5 5" fill="none" stroke="#2b2b2b" strokeWidth="1.6" /></RoundIcon>Back</NavButton>
              <NavButton $end>Next<RoundIcon fill="#a2a2a2"><path d="M0 -5L4 0L0 5M-5 -5L-1 0L-5 5" fill="none" stroke="#2b2b2b" strokeWidth="1.6" /></RoundIcon></NavButton>
            </Controls>
          </Footer>
        </Main>
      </Body>
      <Watermark viewBox="0 0 400 100" role="img" aria-label="Notebookcheck" opacity=".78">
        <g fill="none" strokeLinejoin="round">
          {[["#d8d8d8", 7], ["#a83a3c", 4]].map(([c, w]) => (
            <path key={c} d="M28 61L63 60L69 58L65 31L16 19L21 69L48 82L102 65L82 60L28 63" stroke={c as string} strokeWidth={w as number} />
          ))}
        </g>
        <path d="M30 36C36 31 39 34 43 44C50 31 60 22 72 17C60 28 51 42 45 56C41 49 38 40 30 36Z" fill="#3a3f46" stroke="#d8d8d8" strokeWidth="1.5" />
        <g fontSize="34" strokeWidth="3" stroke="#d0d0d0" paintOrder="stroke" strokeLinejoin="round">
          <text x="74" y="56" fontWeight="900" fill="#a83a3c">NOTEBOOK</text>
          <text x="273" y="56" fontWeight="700" fill="#3d3d3d">CHECK</text>
        </g>
      </Watermark>
    </Shell>
  );
}
